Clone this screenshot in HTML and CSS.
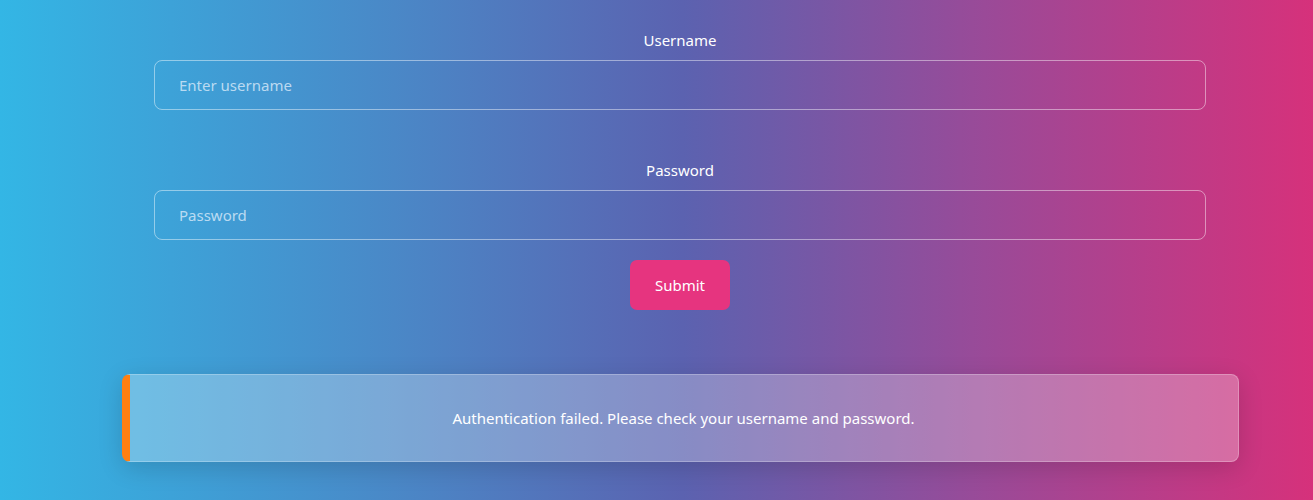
FILE: index.html
```html
<!DOCTYPE html>
<html lang="en">
<head>
<meta charset="utf-8">
<title>Login</title>
<link rel="stylesheet" href="styles.css">
</head>
<body>
<main class="page">
  <form class="login-form">
    <div class="field">
      <label class="field-label" for="username">Username</label>
      <input class="field-input" id="username" type="text" placeholder="Enter username">
    </div>
    <div class="field field-password">
      <label class="field-label" for="password">Password</label>
      <input class="field-input" id="password" type="password" placeholder="Password">
    </div>
    <button class="submit-btn" type="button">Submit</button>
  </form>
  <div class="alert">Authentication failed. Please check your username and password.</div>
</main>
</body>
</html>
```

FILE: styles.css
```css
html, body {
  margin: 0;
  padding: 0;
  height: 100%;
}
body {
  font-family: "Noto Sans", "Open Sans", "Liberation Sans", sans-serif;
  background: linear-gradient(to right, #33b6e5 0%, #4a88c7 30%, #5b62b0 52%, #9a4a98 75%, #d6317b 100%);
  color: #ffffff;
  overflow: hidden;
}
.page {
  padding: 30px 0 0 47px;
  display: flex;
  flex-direction: column;
  align-items: center;
}
.login-form {
  width: 1052px;
  display: flex;
  flex-direction: column;
  align-items: center;
}
.field {
  width: 100%;
  display: flex;
  flex-direction: column;
  align-items: center;
}
.field-password {
  margin-top: 50px;
}
.field-label {
  font-size: 15px;
  line-height: 20px;
  margin-bottom: 10px;
  color: #ffffff;
}
.field-input {
  box-sizing: border-box;
  width: 100%;
  height: 50px;
  padding: 0 24px;
  border: 1px solid rgba(255, 255, 255, 0.45);
  border-radius: 8px;
  background: transparent;
  color: #ffffff;
  font-family: inherit;
  font-size: 15px;
  outline: none;
}
.field-input::placeholder {
  color: rgba(220, 235, 250, 0.8);
}
.submit-btn {
  margin-top: 20px;
  width: 100px;
  height: 50px;
  border: none;
  border-radius: 7px;
  background: #e6347f;
  color: #ffffff;
  font-family: inherit;
  font-size: 15px;
  cursor: pointer;
}
.alert {
  box-sizing: border-box;
  margin-top: 64px;
  width: 1117px;
  height: 88px;
  display: flex;
  align-items: center;
  justify-content: center;
  background: rgba(255, 255, 255, 0.27);
  border: 1px solid rgba(255, 255, 255, 0.25);
  border-left: 8px solid #ff7f11;
  border-radius: 8px;
  box-shadow: 0 6px 24px rgba(0, 0, 0, 0.15);
  font-size: 15px;
  color: #ffffff;
}
```
